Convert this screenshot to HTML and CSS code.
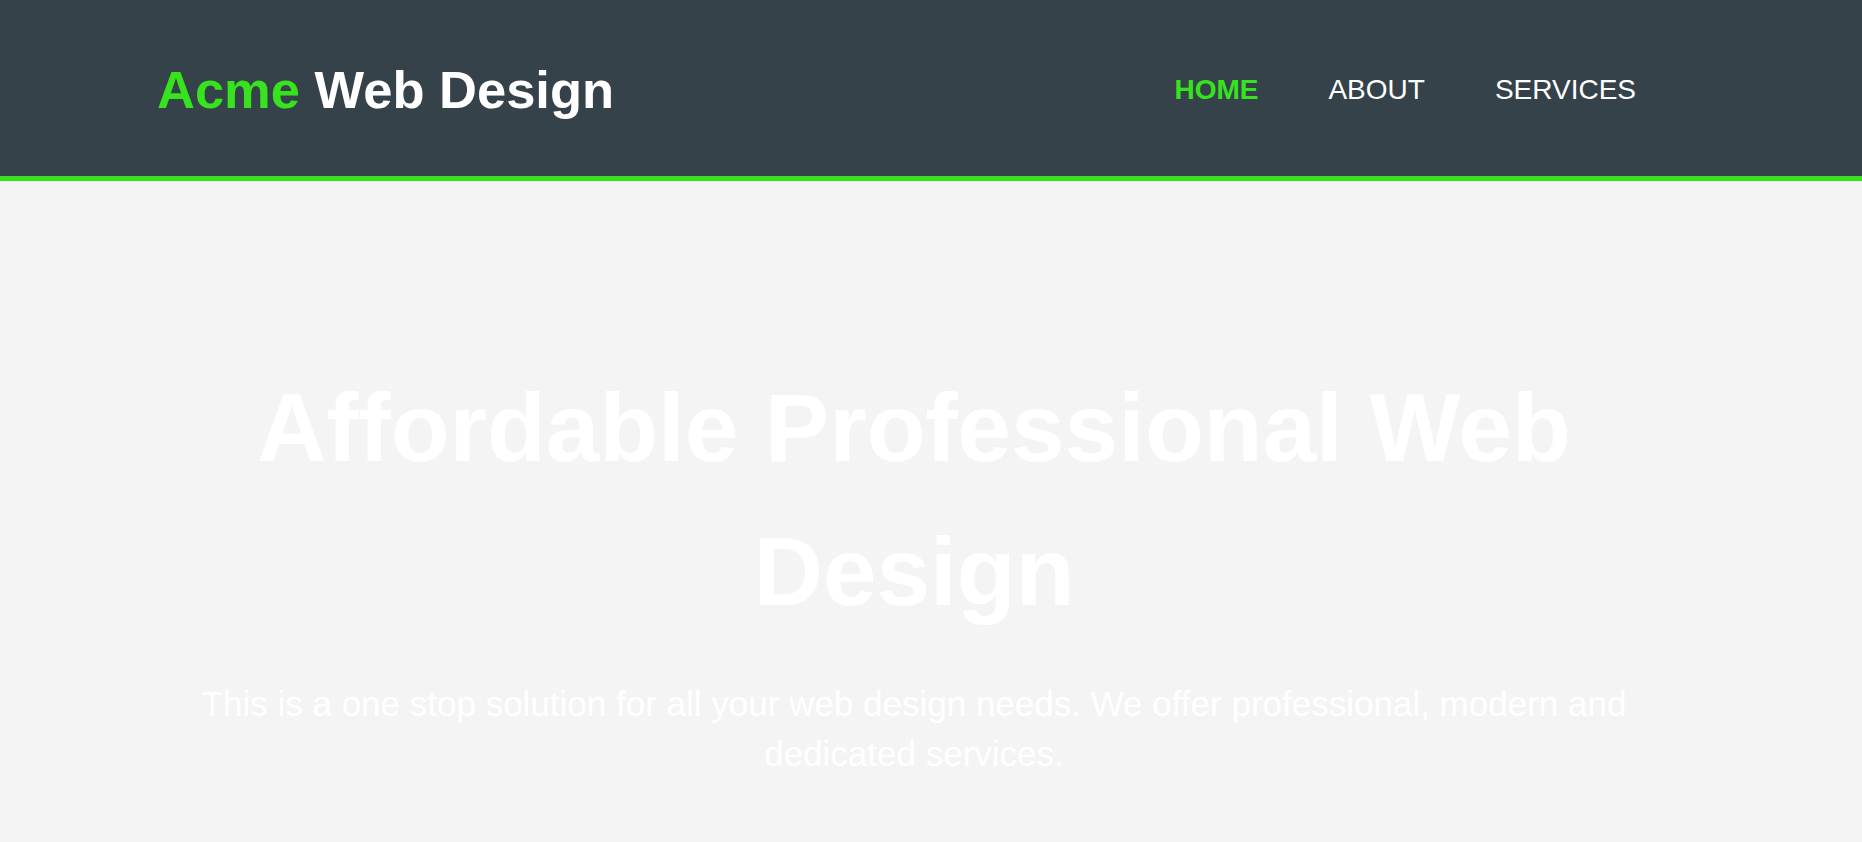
FILE: index.html
```html
<!DOCTYPE html>
<html lang="en">
<head>
<meta charset="utf-8">
<title>Acme Web Design | Welcome</title>
<link rel="stylesheet" href="styles.css">
</head>
<body>
<header class="site-header">
  <div class="container header-inner">
    <h1 class="branding"><span class="highlight">Acme</span> Web Design</h1>
    <nav class="main-nav">
      <ul class="nav-list">
        <li class="nav-item current"><a href="#">HOME</a></li>
        <li class="nav-item"><a href="#">ABOUT</a></li>
        <li class="nav-item"><a href="#">SERVICES</a></li>
      </ul>
    </nav>
  </div>
</header>
<section class="showcase">
  <div class="container">
    <h1 class="showcase-title">Affordable Professional Web Design</h1>
    <p class="showcase-text">This is a one stop solution for all your web design needs. We offer professional, modern and dedicated services.</p>
  </div>
</section>
</body>
</html>
```

FILE: styles.css
```css
html, body {
  margin: 0;
  padding: 0;
}

body {
  background: #f4f4f4;
  font-family: "Liberation Sans", Arial, sans-serif;
  color: #ffffff;
  min-height: 842px;
}

.container {
  width: 1514px;
  margin-left: 157px;
}

.site-header {
  background: #35424a;
  height: 176px;
  border-bottom: 5px solid #37e21f;
  display: flex;
  align-items: center;
}

.header-inner {
  display: flex;
  align-items: center;
  justify-content: space-between;
  padding-top: 3px;
}

.branding {
  margin: 0;
  font-size: 52.5px;
  font-weight: 700;
  color: #ffffff;
}

.highlight {
  color: #37e21f;
}

.nav-list {
  list-style: none;
  margin: 0;
  padding: 0;
  display: flex;
}

.nav-item {
  padding: 0 35px;
  font-size: 28px;
}

.nav-item a {
  color: #ffffff;
  text-decoration: none;
}

.nav-item.current a {
  color: #37e21f;
  font-weight: 700;
}

.showcase {
  text-align: center;
  padding-top: 175px;
}

.showcase-title {
  margin: 0 0 35px;
  font-size: 96.25px;
  line-height: 144px;
  font-weight: 700;
}

.showcase-text {
  margin: 0;
  font-size: 35px;
  line-height: 50px;
}
```
